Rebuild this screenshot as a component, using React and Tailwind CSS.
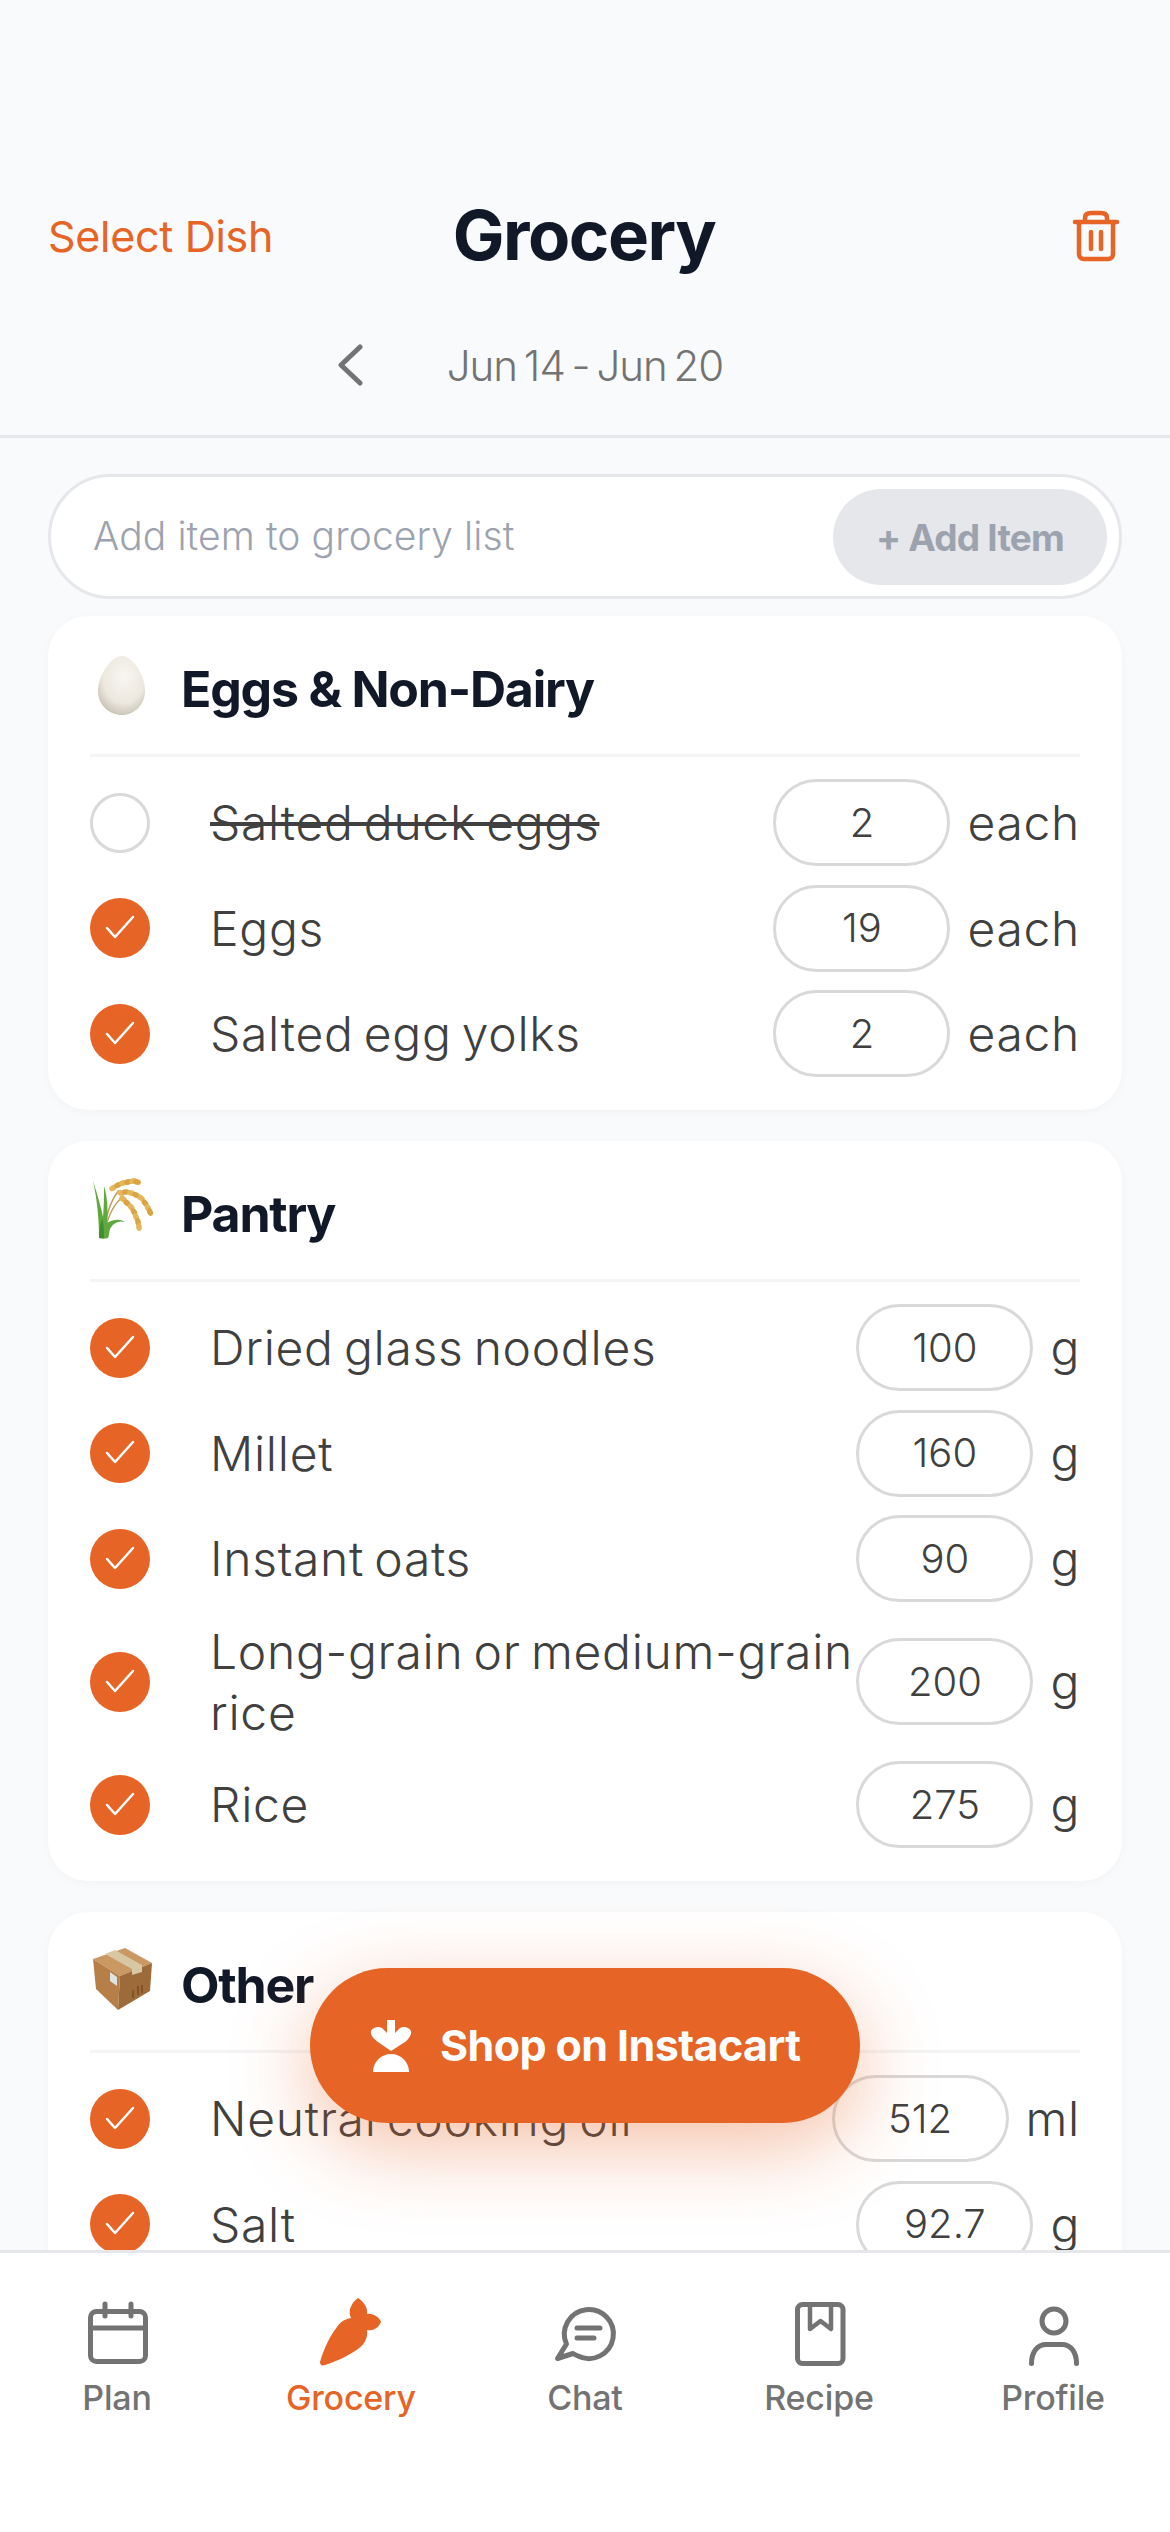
import React from "react";

const sections = [
  {
    title: "Eggs & Non-Dairy",
    icon: "egg",
    items: [
      { name: "Salted duck eggs", qty: "2", unit: "each", off: true },
      { name: "Eggs", qty: "19", unit: "each" },
      { name: "Salted egg yolks", qty: "2", unit: "each" },
    ],
  },
  {
    title: "Pantry",
    icon: "rice",
    items: [
      { name: "Dried glass noodles", qty: "100", unit: "g" },
      { name: "Millet", qty: "160", unit: "g" },
      { name: "Instant oats", qty: "90", unit: "g" },
      { name: "Long-grain or medium-grain rice", qty: "200", unit: "g" },
      { name: "Rice", qty: "275", unit: "g" },
    ],
  },
  {
    title: "Other",
    icon: "box",
    items: [
      { name: "Neutral cooking oil", qty: "512", unit: "ml" },
      { name: "Salt", qty: "92.7", unit: "g" },
    ],
  },
];

const ricePanicles = [
  [[23, 13, -30], [28, 10, -25], [33, 8, -20], [38, 7, -15], [43, 6, -10], [47, 7, 10]],
  [[31, 18, 10], [36, 17, 5], [41, 18, 15], [46, 20, 25], [51, 23, 35], [55, 28, 50], [58, 33, 60], [60, 37, 70]],
  [[33, 24, 30], [37, 28, 40], [41, 32, 50], [44, 37, 60], [46, 42, 70], [48, 47, 80], [49, 52, 85]],
];

function SectionIcon({ type }) {
  if (type === "egg") {
    return (
      <svg width="70" height="70" viewBox="0 0 70 70">
        <defs>
          <radialGradient id="eggShade" cx="0.55" cy="0.35" r="0.75">
            <stop offset="0" stopColor="#f8f6f1" />
            <stop offset="0.6" stopColor="#ece8df" />
            <stop offset="1" stopColor="#bdb6a8" />
          </radialGradient>
        </defs>
        <path
          d="M32 6C22 6 8 24 8 41C8 55 19 65 32 65C44 65 55 55 55 41C55 24 42 6 32 6Z"
          fill="url(#eggShade)"
        />
      </svg>
    );
  }
  if (type === "rice") {
    return (
      <svg width="70" height="70" viewBox="0 0 70 70">
        <path d="M14 60C15 46 19 28 29 15M15 55C18 42 24 28 34 21" fill="none" stroke="#b9a05c" strokeWidth="1.5" />
        {ricePanicles.flat().map(([x, y, r], i) => (
          <ellipse
            key={i}
            cx={x}
            cy={y}
            rx="4"
            ry="2.8"
            fill={i % 2 ? "#d9a441" : "#e4b75c"}
            transform={`rotate(${r} ${x} ${y})`}
          />
        ))}
        <path d="M3 6C7 18 11 32 13 42C14 34 14 20 14 11C18 24 18 38 17 48C24 44 30 44 35 47C29 45 23 48 20 54C19 58 19 61 18 63C15 64 11 64 9 63C9 44 7 24 3 6Z" fill="#5fa83c" />
        <path d="M12 44C14 50 14 58 14 63L9 63C9 56 10 50 12 44Z" fill="#3f8f2f" />
      </svg>
    );
  }
  return (
    <svg width="70" height="70" viewBox="0 0 70 70">
      <path d="M3 13L35 2L62 17L30 30Z" fill="#c99863" />
      <path d="M3 13L30 30L28 64L6 43Z" fill="#b57f47" />
      <path d="M30 30L62 17L60 45L28 64Z" fill="#9d6a39" />
      <path d="M15 8L25 4L52 19L52 26L42 29L42 23Z" fill="#d9c6a4" />
      <path d="M20 26L27 31L27 40L20 35Z" fill="#dfe3e4" />
      <path d="M43 44V52M48 40V49M52 39V47" stroke="#70471f" strokeWidth="1.2" fill="none" />
    </svg>
  );
}

function GroceryRow({ item }) {
  return (
    <div className="flex items-center">
      {item.off ? (
        <span className="h-[60px] w-[60px] shrink-0 rounded-full border-[3px] border-[#d9d9d9] bg-white" />
      ) : (
        <span className="h-[60px] w-[60px] shrink-0 rounded-full bg-[#e66425]">
          <svg width="60" height="60" viewBox="0 0 60 60" fill="none">
            <path d="M17 30L25 39L43 19" stroke="#fff" strokeWidth="2.5" strokeLinecap="round" strokeLinejoin="round" />
          </svg>
        </span>
      )}
      <span
        className={`ml-[60px] min-w-0 flex-1 text-[48px] leading-[61px] font-light tracking-[0.7px] [word-spacing:-4px] text-[#404040] ${
          item.off ? "line-through" : ""
        }`}
      >
        {item.name}
      </span>
      <span className="flex h-[87px] w-[177px] shrink-0 items-center justify-center rounded-full border-[3px] border-[#d9d9d9] bg-white text-[40px] font-light text-[#404040]">
        {item.qty}
      </span>
      <span className="ml-[17px] shrink-0 text-[48px] leading-[61px] font-light tracking-[0.7px] text-[#404040]">
        {item.unit}
      </span>
    </div>
  );
}

function NavIcon({ name }) {
  const common = { fill: "none", stroke: "#737373", strokeWidth: 5, strokeLinecap: "round", strokeLinejoin: "round" };
  return (
    <svg width="70" height="70" viewBox="0 0 70 70">
      {name === "Plan" && (
        <g {...common}>
          <rect x="8.5" y="14.5" width="55" height="50" rx="6" />
          <path d="M8.5 31H63.5M23 7V19M49 7V19" />
        </g>
      )}
      {name === "Grocery" && (
        <path
          transform="translate(4 1)"
          fill="#e66425"
          d="M0 64C4 50 10 38 17 29C20 24 25 21 31 20C28 14 30 6 38 0C44 4 48 10 47 16C53 15 59 19 61 24C58 31 52 33 47 32C48 39 45 46 38 51C30 57 15 64 5 67C2 68 0 67 0 64Z"
        />
      )}
      {name === "Chat" && (
        <g {...common} transform="translate(4 11)">
          <path d="M12.5 36A24.5 24.5 0 1 1 24 48C22.5 47.5 20.5 46.5 19 45.5L3.5 50.5Z" />
          <path d="M23 20H46M23 30H40" />
        </g>
      )}
      {name === "Recipe" && (
        <g {...common}>
          <rect x="13.5" y="7.5" width="45.5" height="59" rx="5" />
          <path d="M26 8V32L36.5 24L47 32V8" strokeWidth="4.5" />
        </g>
      )}
      {name === "Profile" && (
        <g {...common}>
          <circle cx="36" cy="24" r="12" />
          <path d="M13.5 66.5C13.5 54 20 47.5 28 47.5H44C52 47.5 58.5 54 58.5 66.5" />
        </g>
      )}
    </svg>
  );
}

export default function App() {
  return (
    <div className="relative flex h-[2532px] w-[1170px] flex-col overflow-hidden bg-[#f9fafb] font-['Inter',sans-serif]">
      {/* Header */}
      <header className="h-[438px] shrink-0 border-b-[3px] border-[#e5e7eb] pt-[184px]">
        <div className="grid h-[80px] grid-cols-3 items-center pr-[50px] pl-[48px]">
          <span className="justify-self-start text-[43px] tracking-[-0.3px] text-[#e66425]">Select Dish</span>
          <h1 className="text-center text-[69px] font-bold tracking-[-1.5px] text-[#111827]">Grocery</h1>
          <svg className="justify-self-end" width="50" height="55" viewBox="0 0 50 55" fill="none" stroke="#e66425" strokeWidth="4.5" strokeLinecap="round" strokeLinejoin="round">
            <path d="M5 14H47M15 14V10C15 6 18 5 21 5H31C34 5 37 6 37 10V14" />
            <path d="M9 14V46C9 49 11 51 14 51H38C41 51 43 49 43 46V14M21 24V41M31 24V41" />
          </svg>
        </div>
        <div className="mt-[71px] flex h-[60px] items-center justify-center">
          <svg className="mr-[84px]" width="26" height="42" viewBox="0 0 26 42" fill="none" stroke="#737373" strokeWidth="5" strokeLinecap="round" strokeLinejoin="round">
            <path d="M23 3L4 21L23 39" />
          </svg>
          <span className="text-[42px] font-light tracking-[-1px] [word-spacing:-4px] text-[#737373]">Jun 14 - Jun 20</span>
          <span className="ml-[84px] w-[26px]" />
        </div>
      </header>

      {/* List */}
      <main className="min-h-0 flex-1 overflow-hidden px-[48px] pt-[36px]">
        <div className="flex h-[125px] items-center justify-between rounded-full border-[3px] border-[#e5e7eb] bg-white pr-[12px] pl-[42px]">
          <span className="text-[39px] font-light tracking-[0.1px] text-[#9ca3af]">Add item to grocery list</span>
          <span className="flex h-[96px] w-[274px] items-center justify-center rounded-full bg-[#e5e7eb] pt-[2px] text-[37px] font-bold tracking-[-0.8px] text-[#9ca3af]">
            + Add Item
          </span>
        </div>

        <div className="mt-[17px] flex flex-col gap-[31px]">
          {sections.map((section) => (
            <section key={section.title} className="rounded-[40px] bg-white px-[42px] pb-[33px] shadow-[0_2px_10px_rgba(0,0,0,0.03)]">
              <div className="flex h-[141px] items-center border-b-[3px] border-[#f3f4f6]">
                <span className="w-[91px] shrink-0">
                  <SectionIcon type={section.icon} />
                </span>
                <h2 className="mt-[8px] text-[50px] font-bold tracking-[-1.2px] text-[#111827]">{section.title}</h2>
              </div>
              <div className="flex flex-col gap-[18.5px] pt-[22px]">
                {section.items.map((item) => (
                  <GroceryRow key={item.name} item={item} />
                ))}
              </div>
            </section>
          ))}
        </div>
      </main>

      {/* Floating button */}
      <div className="absolute top-[1968px] left-[310px] flex h-[155px] w-[550px] items-center rounded-full bg-[#e66425] pl-[60px] shadow-[0_24px_80px_rgba(230,100,37,0.4)]">
        <svg width="42" height="54" viewBox="0 0 42 54" fill="#fff">
          <path d="M17 1H25V14L30 9C33 7 39 8 41 12C42 16 38 21 35 23L21 32L8 23C4 20 0 16 1 12C3 8 9 7 12 9L17 14Z" />
          <path d="M3 53C3 43 11 35 21 35C31 35 39 43 39 53Z" />
        </svg>
        <span className="ml-[28px] text-[43px] font-bold tracking-[-0.6px] text-white">Shop on Instacart</span>
      </div>

      {/* Bottom nav */}
      <nav className="relative grid h-[282px] shrink-0 grid-cols-5 border-t-[3px] border-[#e5e7eb] bg-white pt-[44px]">
        {["Plan", "Grocery", "Chat", "Recipe", "Profile"].map((name) => (
          <div key={name} className="flex flex-col items-center">
            <NavIcon name={name} />
            <span
              className={`mt-[12px] text-[34px] leading-[38px] font-medium tracking-[-0.2px] ${
                name === "Grocery" ? "text-[#e66425]" : "text-[#737373]"
              }`}
            >
              {name}
            </span>
          </div>
        ))}
      </nav>
    </div>
  );
}
